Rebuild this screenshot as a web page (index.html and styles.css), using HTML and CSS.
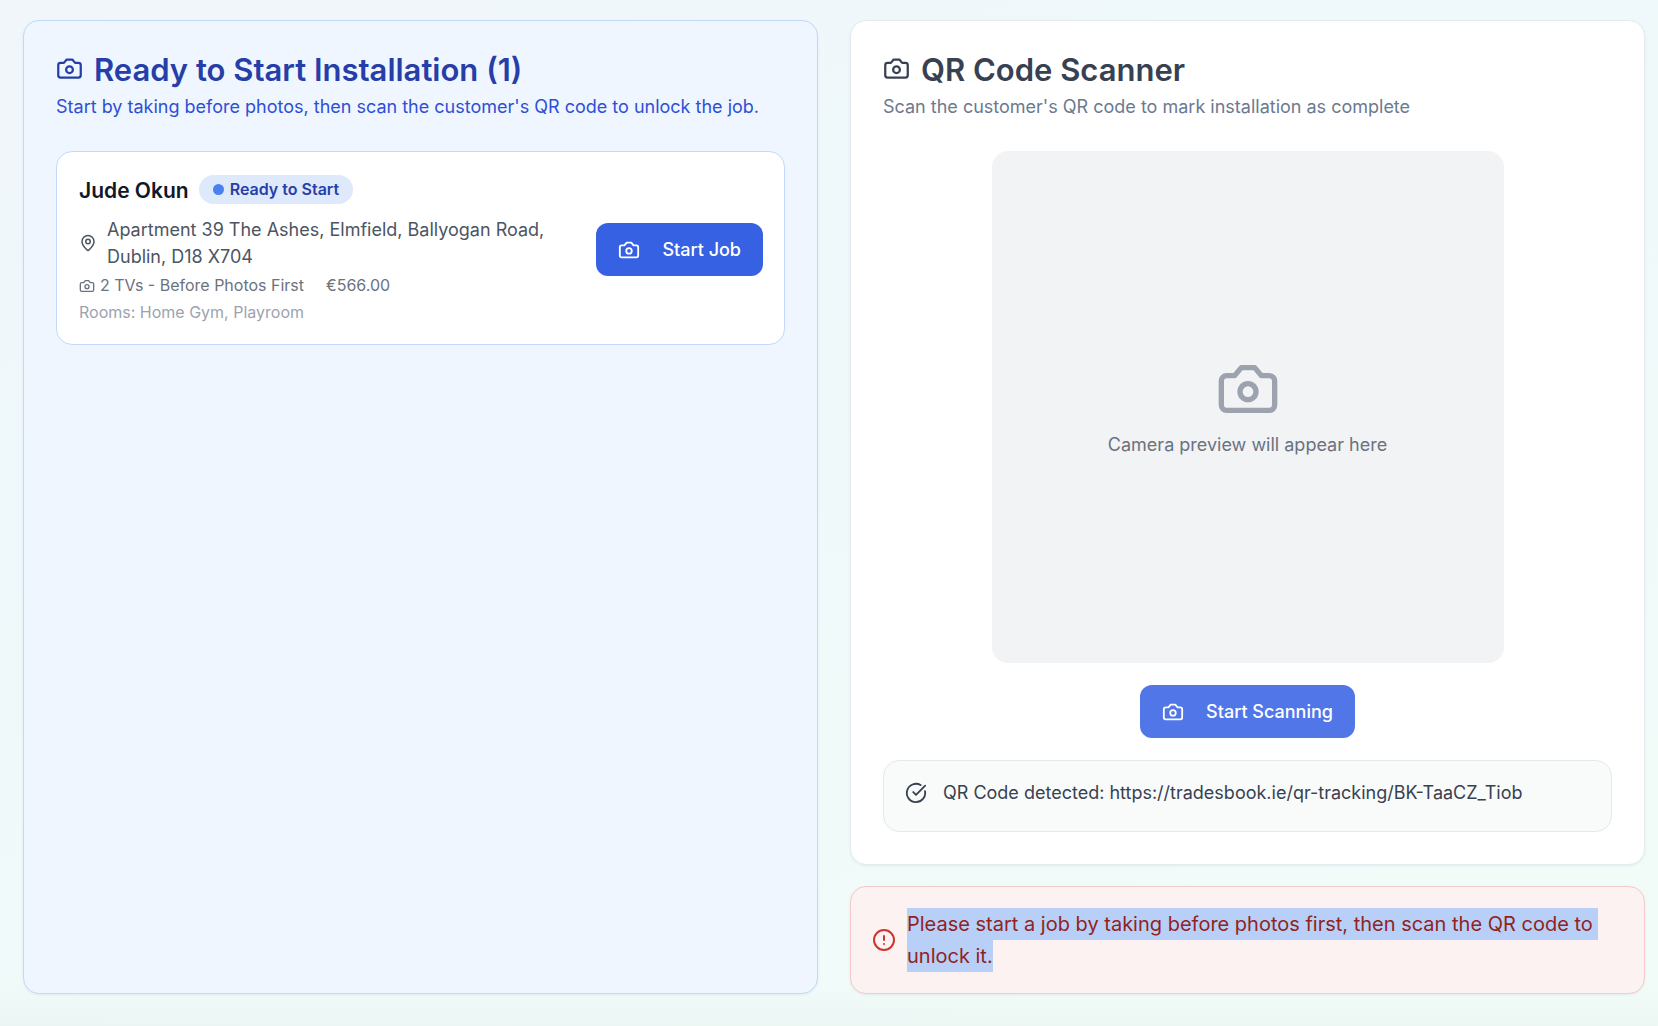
FILE: index.html
```html
<!DOCTYPE html>
<html lang="en">
<head>
<meta charset="utf-8">
<meta name="viewport" content="width=device-width, initial-scale=1">
<title>Installer Jobs</title>
<link rel="stylesheet" href="styles.css">
</head>
<body>
<svg class="sprite" aria-hidden="true">
  <symbol id="camera" viewBox="0 0 24 24">
    <path d="M14.5 4h-5L7 7H4a2 2 0 0 0-2 2v9a2 2 0 0 0 2 2h16a2 2 0 0 0 2-2V9a2 2 0 0 0-2-2h-3l-2.5-3z"/>
    <circle cx="12" cy="13" r="3"/>
  </symbol>
</svg>
<main class="page">
  <section class="panel panel-ready">
    <header class="panel-header">
      <h2 class="panel-title"><svg class="icon icon-lg"><use href="#camera"/></svg>Ready to Start Installation (1)</h2>
      <p class="panel-text">Start by taking before photos, then scan the customer's QR code to unlock the job.</p>
    </header>
    <article class="job">
      <div class="job-info">
        <div class="job-head">
          <h3 class="job-name">Jude Okun</h3>
          <span class="badge"><span class="dot"></span>Ready to Start</span>
        </div>
        <div class="job-address">
          <svg class="icon icon-sm" viewBox="0 0 24 24"><path d="M20 10c0 4.993-5.539 10.193-7.399 11.799a1 1 0 0 1-1.202 0C9.539 20.193 4 14.993 4 10a8 8 0 0 1 16 0"/><circle cx="12" cy="10" r="3"/></svg>
          <span>Apartment 39 The Ashes, Elmfield, Ballyogan Road, Dublin, D18 X704</span>
        </div>
        <div class="job-meta">
          <span class="job-tvs"><svg class="icon icon-xs"><use href="#camera"/></svg>2 TVs - Before Photos First</span>
          <span>€566.00</span>
        </div>
        <p class="job-rooms">Rooms: Home Gym, Playroom</p>
      </div>
      <button class="button" type="button"><svg class="icon icon-md"><use href="#camera"/></svg>Start Job</button>
    </article>
  </section>

  <div class="column">
    <section class="panel panel-scanner">
      <header class="panel-header">
        <h2 class="panel-title"><svg class="icon icon-lg"><use href="#camera"/></svg>QR Code Scanner</h2>
        <p class="panel-text">Scan the customer's QR code to mark installation as complete</p>
      </header>
      <div class="scanner">
        <div class="preview">
          <svg class="icon icon-xl"><use href="#camera"/></svg>
          <p>Camera preview will appear here</p>
        </div>
        <button class="button button-soft" type="button"><svg class="icon icon-md"><use href="#camera"/></svg>Start Scanning</button>
        <div class="result" role="status">
          <svg class="icon icon-md" viewBox="0 0 24 24"><path d="M21.801 10A10 10 0 1 1 17 3.335"/><path d="m9 11 3 3L22 4"/></svg>
          <p>QR Code detected: https://tradesbook.ie/qr-tracking/BK-TaaCZ_Tiob</p>
        </div>
      </div>
    </section>
    <div class="error" role="alert">
      <svg class="icon icon-err" viewBox="0 0 24 24"><circle cx="12" cy="12" r="10"/><path d="M12 8v4M12 16h.01"/></svg>
      <p id="error-text">Please start a job by taking before photos first, then scan the QR code to unlock it.</p>
    </div>
  </div>
</main>
<script src="script.js"></script>
</body>
</html>
```
FILE: styles.css
```css
* {
  box-sizing: border-box;
}

body {
  margin: 0;
  min-height: 100vh;
  background:
    linear-gradient(to bottom, transparent 96%, rgba(0, 0, 0, 0.02)),
    linear-gradient(160deg, #f1f6fb 0%, #eff9fa 40%, #f1fbf8 85%);
  color: #374151;
  font-family: Inter, "Liberation Sans", sans-serif;
  font-size: 18px;
  line-height: 27px;
}

h2, h3, p {
  margin: 0;
}

.sprite {
  display: none;
}

.page {
  display: grid;
  grid-template-columns: 1fr 1fr;
  gap: 32px;
  padding: 20px 13px 32px 23px;
}

.column {
  display: flex;
  flex-direction: column;
  gap: 21px;
}

.panel {
  padding: 32px;
  border: 1px solid #e5eaee;
  border-radius: 16px;
  background: #fff;
  box-shadow: 0 1px 3px rgba(0, 0, 0, 0.06);
}

.panel-ready {
  border-color: #c1d9fb;
  background: #eff6ff;
}

.panel-header {
  margin-bottom: 31px;
}

.panel-title {
  display: flex;
  align-items: flex-start;
  gap: 11px;
  color: #374151;
  font-size: 31px;
  font-weight: 600;
  line-height: 34px;
}

.panel-text {
  margin-top: 6px;
  color: #6b7a90;
}

.panel-ready .panel-title {
  color: #263fa8;
}

.panel-ready .panel-text {
  color: #2e4fd6;
}

.icon {
  flex: none;
  fill: none;
  stroke: currentColor;
  stroke-width: 2;
  stroke-linecap: round;
  stroke-linejoin: round;
}

.icon-xs { width: 16px; height: 16px; }
.icon-sm { width: 18px; height: 18px; }
.icon-md { width: 22px; height: 22px; }
.icon-lg { width: 27px; height: 27px; margin-top: 2px; }
.icon-xl { width: 64px; height: 64px; color: #9ca3af; }
.icon-err { width: 24px; height: 24px; color: #d0342f; }

.job {
  display: flex;
  align-items: center;
  gap: 24px;
  padding: 21px 21px 18px 22px;
  border: 1px solid #c1d9fb;
  border-radius: 16px;
  background: #fff;
}

.job-info {
  flex: 1;
}

.job-head {
  display: flex;
  align-items: center;
  gap: 10px;
  margin-bottom: 11px;
}

.job-name {
  padding-top: 3px;
  color: #111827;
  font-size: 21px;
  font-weight: 600;
  line-height: 29px;
}

.badge {
  display: inline-flex;
  align-items: center;
  gap: 6px;
  padding: 1px 14px;
  border-radius: 16px;
  background: #dfe9fc;
  color: #263fa8;
  font-size: 16px;
  font-weight: 600;
}

.dot {
  width: 11px;
  height: 11px;
  border-radius: 50%;
  background: #4b81ee;
}

.job-address {
  display: flex;
  align-items: center;
  gap: 10px;
  color: #4b5563;
}

.job-meta {
  display: flex;
  gap: 22px;
  margin-top: 2px;
  color: #6b7280;
  font-size: 16px;
}

.job-tvs {
  display: flex;
  align-items: center;
  gap: 5px;
}

.job-rooms {
  color: #9ca3af;
  font-size: 16px;
}

.button {
  display: inline-flex;
  align-items: center;
  gap: 22px;
  padding: 13px 22px;
  border: 0;
  border-radius: 12px;
  background: #3761e3;
  color: #fff;
  font: inherit;
  font-weight: 500;
}

.button-soft {
  background: #5076e8;
}

.scanner {
  display: flex;
  flex-direction: column;
  align-items: center;
  gap: 22px;
}

.preview {
  display: flex;
  flex-direction: column;
  align-items: center;
  justify-content: center;
  gap: 10px;
  width: 100%;
  max-width: 512px;
  aspect-ratio: 1;
  border-radius: 16px;
  background: #f2f3f5;
  color: #6b7280;
}

.result {
  display: flex;
  align-items: center;
  gap: 16px;
  width: 100%;
  padding: 18px 21px 25px;
  border: 1px solid #e5e9ea;
  border-radius: 16px;
  background: #f9fbfa;
}

.error {
  display: flex;
  align-items: center;
  gap: 11px;
  padding: 21px;
  border: 1px solid #f5caca;
  border-radius: 16px;
  background: #fcf2f1;
  box-shadow: 0 1px 3px rgba(0, 0, 0, 0.06);
  color: #91231f;
  font-size: 20px;
  line-height: 32px;
}

.error ::selection {
  background: #b8d0f7;
  color: #91231f;
}
```
FILE: script.js
```js
// Select the message so it can be copied straight away.
getSelection().selectAllChildren(document.getElementById("error-text"));
```
